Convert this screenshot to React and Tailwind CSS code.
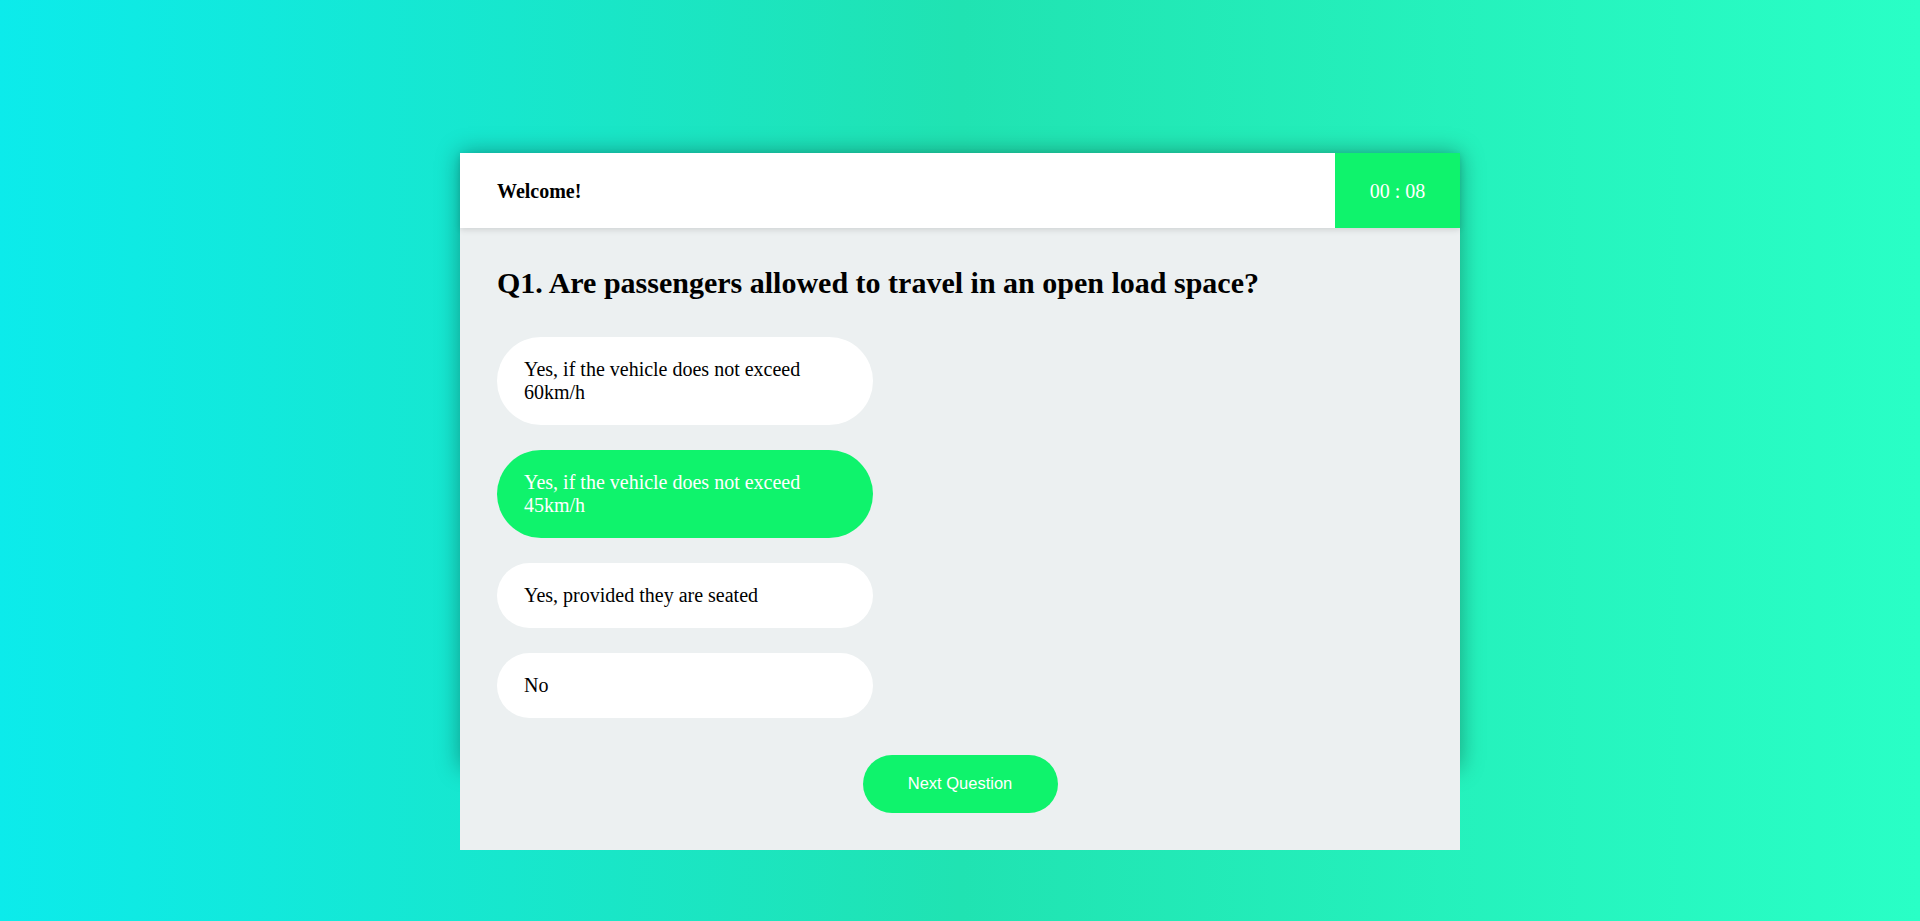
import React, { useState } from "react";

const options = [
  "Yes, if the vehicle does not exceed 60km/h",
  "Yes, if the vehicle does not exceed 45km/h",
  "Yes, provided they are seated",
  "No",
];

const App = () => {
  const [selected, setSelected] = useState(1);

  return (
    <div className="min-h-screen w-full bg-linear-to-r from-[#0cebeb] via-[#20e3b2] to-[#29ffc6] flex justify-center pt-[153px] font-['Liberation_Serif',serif]">
      <div className="w-[1000px] h-[615px] flex flex-col shadow-[0_0_22px_rgba(0,0,0,0.35)]">
        <header className="h-[75px] shrink-0 bg-white flex items-center justify-between relative z-10 shadow-[0_2px_6px_rgba(0,0,0,0.12)]">
          <p className="pl-[37px] text-[20px] font-bold text-black">Welcome!</p>
          <div className="w-[125px] h-full bg-[#0ff36c] flex items-center justify-center text-white text-[20px]">
            00 : 08
          </div>
        </header>

        <main className="shrink-0 bg-[#ecf0f1] px-[37px] pt-[38px] pb-[37px]">
          <h2 className="text-[30px] font-bold text-black leading-[34.5px]">
            Q1. Are passengers allowed to travel in an open load space?
          </h2>

          <div className="mt-[36px] flex flex-col gap-[25px]">
            {options.map((opt, index) => (
              <button
                key={index}
                onClick={() => setSelected(index)}
                className={
                  "w-[376px] text-left rounded-full pl-[27px] pr-[27px] py-[21px] text-[20px] leading-[23px] " +
                  (selected === index
                    ? "bg-[#0ff36c] text-white"
                    : "bg-white text-black")
                }
              >
                {opt}
              </button>
            ))}
          </div>

          <div className="mt-[37px] flex justify-center">
            <button className="w-[195px] h-[58px] rounded-full bg-[#0ff36c] text-white text-[16.5px] font-['Liberation_Sans',sans-serif]">
              Next Question
            </button>
          </div>
        </main>
      </div>
    </div>
  );
};

export default App;
